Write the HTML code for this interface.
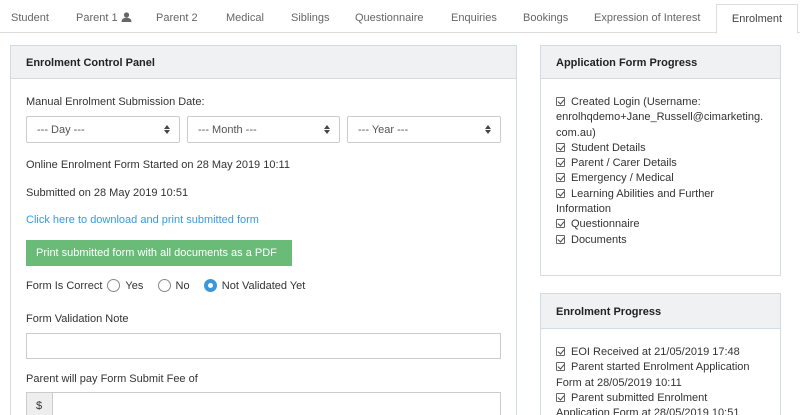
<!DOCTYPE html>
<html style="overflow:hidden;width:800px;height:415px"><head><meta charset="utf-8"><style>
*{box-sizing:border-box;margin:0;padding:0}
body{width:800px;height:415px;overflow:hidden;background:#fff;font-family:"Liberation Sans",sans-serif;font-size:11px;color:#333;position:relative}
.abs{position:absolute;white-space:nowrap}
.tabs{position:absolute;left:0;top:0;width:800px;height:33px;border-bottom:1px solid #ddd}
.tab{position:absolute;top:12px;color:#666;font-size:11px}
.active{position:absolute;left:716px;top:4px;width:82px;height:30px;border:1px solid #ddd;border-bottom:1px solid #fff;background:#fff;color:#444;padding-top:8px;text-align:center}
.panel{position:absolute;border:1px solid #d3dbe2;background:#fff}
.ph{height:33px;background:#f0f1f3;border-bottom:1px solid #d3dbe2;font-weight:bold;font-size:11px;padding:11px 0 0 15px;color:#222}
.sel{position:absolute;top:116px;height:27px;border:1px solid #ccc;border-radius:2px;color:#555;padding:7px 0 0 10px}
.sel:after{content:"";position:absolute;right:9px;top:8px;border:3px solid transparent;border-bottom:4px solid #444;border-top:0}
.sel:before{content:"";position:absolute;right:9px;top:13px;border:3px solid transparent;border-top:4px solid #444;border-bottom:0}
.rad{display:inline-block;width:13px;height:13px;border:1px solid #888;border-radius:50%;vertical-align:-3px;margin:0 5px 0 5px}
.on{border:4px solid #3c97da;background:#fff}
.cb{display:inline-block;width:9px;height:9px;border:1px solid #666;border-radius:1px;vertical-align:-1px;margin-right:6px;position:relative}
.cb:after{content:"";position:absolute;left:2px;top:0px;width:3px;height:5px;border-right:1px solid #444;border-bottom:1px solid #444;transform:rotate(40deg)}
.list{position:absolute;left:15px;line-height:15.3px;color:#333}
</style></head><body>
<div class="tabs">
<span class="tab" style="left:11px">Student</span>
<span class="tab" style="left:76px">Parent 1 <svg width="11" height="10" viewBox="0 0 11 10" style="vertical-align:-1px"><circle cx="5.5" cy="3" r="2.6" fill="#666"/><path d="M0.5 10 Q0.5 5.8 5.5 5.8 Q10.5 5.8 10.5 10Z" fill="#666"/></svg></span>
<span class="tab" style="left:156px">Parent 2</span>
<span class="tab" style="left:226px">Medical</span>
<span class="tab" style="left:291px">Siblings</span>
<span class="tab" style="left:355px">Questionnaire</span>
<span class="tab" style="left:451px">Enquiries</span>
<span class="tab" style="left:523px">Bookings</span>
<span class="tab" style="left:594px">Expression of Interest</span>
<div class="active">Enrolment</div>
</div>

<div class="panel" style="left:10px;top:45px;width:507px;height:380px">
<div class="ph">Enrolment Control Panel</div>
</div>
<span class="abs" style="left:26px;top:96px">Manual Enrolment Submission Date:</span>
<div class="sel" style="left:26px;width:154px">--- Day ---</div>
<div class="sel" style="left:187px;width:153px">--- Month ---</div>
<div class="sel" style="left:347px;width:154px">--- Year ---</div>
<span class="abs" style="left:26px;top:159px">Online Enrolment Form Started on 28 May 2019 10:11</span>
<span class="abs" style="left:26px;top:187px">Submitted on 28 May 2019 10:51</span>
<span class="abs" style="left:26px;top:214px;color:#3a9ad9">Click here to download and print submitted form</span>
<div class="abs" style="left:26px;top:240px;width:266px;height:26px;background:#6bbb78;color:#fff;padding:7px 0 0 10px">Print submitted form with all documents as a PDF</div>
<span class="abs" style="left:26px;top:279px">Form Is Correct<span class="rad"></span>Yes &nbsp;&nbsp;<span class="rad"></span>No &nbsp;&nbsp;<span class="rad on"></span>Not Validated Yet</span>
<span class="abs" style="left:26px;top:313px">Form Validation Note</span>
<div class="abs" style="left:26px;top:333px;width:475px;height:26px;border:1px solid #ccc"></div>
<span class="abs" style="left:26px;top:373px">Parent will pay Form Submit Fee of</span>
<div class="abs" style="left:26px;top:392px;width:475px;height:30px;border:1px solid #ccc"><div style="position:absolute;left:0;top:0;width:26px;height:30px;background:#eee;border-right:1px solid #ccc;padding:7px 0 0 9px">$</div></div>

<div class="panel" style="left:540px;top:45px;width:241px;height:231px">
<div class="ph">Application Form Progress</div>
<div class="list" style="top:49px">
<span class="cb"></span>Created Login (Username:<br>enrolhqdemo+Jane_Russell@cimarketing.<br>com.au)<br>
<span class="cb"></span>Student Details<br>
<span class="cb"></span>Parent / Carer Details<br>
<span class="cb"></span>Emergency / Medical<br>
<span class="cb"></span>Learning Abilities and Further<br>Information<br>
<span class="cb"></span>Questionnaire<br>
<span class="cb"></span>Documents
</div>
</div>

<div class="panel" style="left:540px;top:293px;width:241px;height:140px">
<div class="ph" style="height:35px;padding-top:12px">Enrolment Progress</div>
<div class="list" style="top:51px">
<span class="cb"></span>EOI Received at 21/05/2019 17:48<br>
<span class="cb"></span>Parent started Enrolment Application<br>Form at 28/05/2019 10:11<br>
<span class="cb"></span>Parent submitted Enrolment<br>Application Form at 28/05/2019 10:51
</div>
</div>
</body></html>
